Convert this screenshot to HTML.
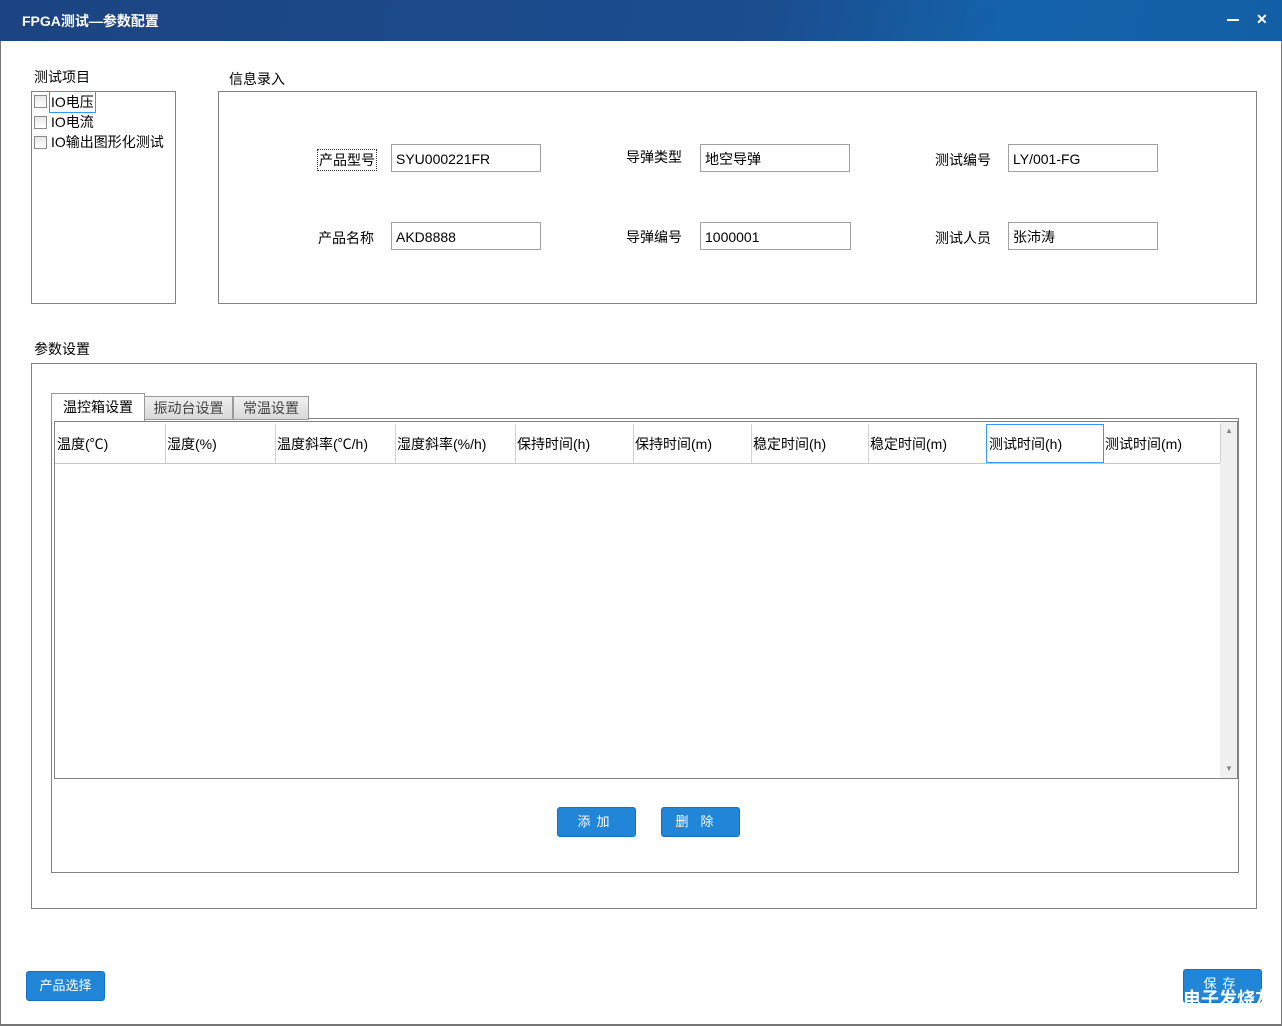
<html><head><style>
body{margin:0;width:1282px;height:1026px;overflow:hidden;background:#fff;font-family:"Liberation Sans","Noto Sans CJK SC",sans-serif;font-size:14px;color:#000;position:relative}
.a{position:absolute}
.box{position:absolute;border:1px solid #828282}
.inp{position:absolute;border:1px solid #a0a0a0;width:148px;height:28px;line-height:28px;padding-left:4px;box-sizing:border-box;font-size:14px}
.lbl{position:absolute;font-size:14px}
.cb{position:absolute;width:11px;height:11px;border:1px solid #8a8a8a;background:linear-gradient(#e8e8e8,#fff)}
.btn{position:absolute;background:#2286d8;border:1px solid #1470c0;border-radius:3px;color:#fff;text-align:center;font-size:13px;box-sizing:border-box}
.th{position:absolute;top:424px;height:39px;line-height:40px;border-right:1px solid #d0d0d0;font-size:14px;padding-left:2px;box-sizing:border-box}
</style></head><body>
<div class="a" style="left:0;top:0;width:1282px;height:41px;background:linear-gradient(100deg,#1c4482 0%,#1b4d8f 60%,#1462aa 78%,#135fa5 100%)"></div>
<div class="a" style="left:22px;top:11px;color:#fff;font-weight:bold;font-size:14px">FPGA测试—参数配置</div>
<div class="a" style="left:1227px;top:19px;width:12px;height:2px;background:#fff"></div>
<div class="a" style="left:1256px;top:11px;color:#fff;font-weight:bold;font-size:14px">✕</div>
<div class="a" style="left:0;top:41px;width:1px;height:985px;background:#777"></div>
<div class="a" style="left:1281px;top:41px;width:1px;height:985px;background:#777"></div>
<div class="a" style="left:0;top:1024px;width:1282px;height:2px;background:#777"></div>

<div class="lbl" style="left:34px;top:67px">测试项目</div>
<div class="box" style="left:31px;top:91px;width:143px;height:211px"></div>
<div class="cb" style="left:34px;top:95px"></div><div class="lbl" style="left:49px;top:91px;border:1px solid #3399ff;padding:0 1px">IO电压</div>
<div class="cb" style="left:34px;top:116px"></div><div class="lbl" style="left:51px;top:112px">IO电流</div>
<div class="cb" style="left:34px;top:136px"></div><div class="lbl" style="left:51px;top:132px">IO输出图形化测试</div>

<div class="lbl" style="left:229px;top:69px">信息录入</div>
<div class="box" style="left:218px;top:91px;width:1037px;height:211px"></div>
<div class="lbl" style="left:317px;top:149px;border:1px dotted #333;padding:0 1px">产品型号</div>
<div class="inp" style="left:391px;top:144px;width:150px">SYU000221FR</div>
<div class="lbl" style="left:626px;top:147px">导弹类型</div>
<div class="inp" style="left:700px;top:144px;width:150px">地空导弹</div>
<div class="lbl" style="left:935px;top:150px">测试编号</div>
<div class="inp" style="left:1008px;top:144px;width:150px">LY/001-FG</div>
<div class="lbl" style="left:318px;top:228px">产品名称</div>
<div class="inp" style="left:391px;top:222px;width:150px">AKD8888</div>
<div class="lbl" style="left:626px;top:227px">导弹编号</div>
<div class="inp" style="left:700px;top:222px;width:151px">1000001</div>
<div class="lbl" style="left:935px;top:228px">测试人员</div>
<div class="inp" style="left:1008px;top:222px;width:150px">张沛涛</div>

<div class="lbl" style="left:34px;top:339px">参数设置</div>
<div class="box" style="left:31px;top:363px;width:1224px;height:544px"></div>
<div class="box" style="left:51px;top:418px;width:1186px;height:453px"></div>
<div class="a" style="left:51px;top:393px;width:92px;height:27px;background:#fff;border:1px solid #999;border-bottom:none;line-height:27px;text-align:center">温控箱设置</div>
<div class="a" style="left:144px;top:396px;width:87px;height:22px;background:linear-gradient(#f0f0f0,#d8d8d8);border:1px solid #999;line-height:23px;text-align:center;color:#444">振动台设置</div>
<div class="a" style="left:233px;top:396px;width:74px;height:22px;background:linear-gradient(#f0f0f0,#d8d8d8);border:1px solid #999;line-height:23px;text-align:center;color:#444">常温设置</div>
<div class="a" style="left:54px;top:421px;width:1182px;height:356px;border:1px solid #828282"></div>
<div class="a" style="left:55px;top:463px;width:1165px;height:1px;background:#c8c8c8"></div>
<div class="a" style="left:1220px;top:422px;width:17px;height:356px;background:#f0f0f0"></div>
<div class="a" style="left:1225px;top:426px;font-size:8px;color:#888">▲</div>
<div class="a" style="left:1225px;top:764px;font-size:8px;color:#888">▼</div>
<div class="th" style="left:55px;width:111px">温度(℃)</div>
<div class="th" style="left:165px;width:111px">湿度(%)</div>
<div class="th" style="left:275px;width:121px">温度斜率(℃/h)</div>
<div class="th" style="left:395px;width:121px">湿度斜率(%/h)</div>
<div class="th" style="left:515px;width:119px">保持时间(h)</div>
<div class="th" style="left:633px;width:119px">保持时间(m)</div>
<div class="th" style="left:751px;width:118px">稳定时间(h)</div>
<div class="th" style="left:868px;width:119px">稳定时间(m)</div>
<div class="th" style="left:986px;width:118px;border:1px solid #3399ff;line-height:38px">测试时间(h)</div>
<div class="th" style="left:1103px;width:118px">测试时间(m)</div>

<div class="btn" style="left:557px;top:807px;width:79px;height:30px;line-height:28px;letter-spacing:6px">添加</div>
<div class="btn" style="left:661px;top:807px;width:79px;height:30px;line-height:28px;letter-spacing:12px">删除</div>
<div class="btn" style="left:26px;top:971px;width:79px;height:30px;line-height:28px">产品选择</div>
<div class="btn" style="left:1183px;top:969px;width:79px;height:34px;line-height:28px;letter-spacing:6px;overflow:hidden">保存</div>
<div class="a" style="left:1183px;top:985px;width:79px;height:20px;overflow:hidden;color:#fff;font-weight:bold;font-size:18px;white-space:nowrap">电子发烧友</div>
</body></html>
